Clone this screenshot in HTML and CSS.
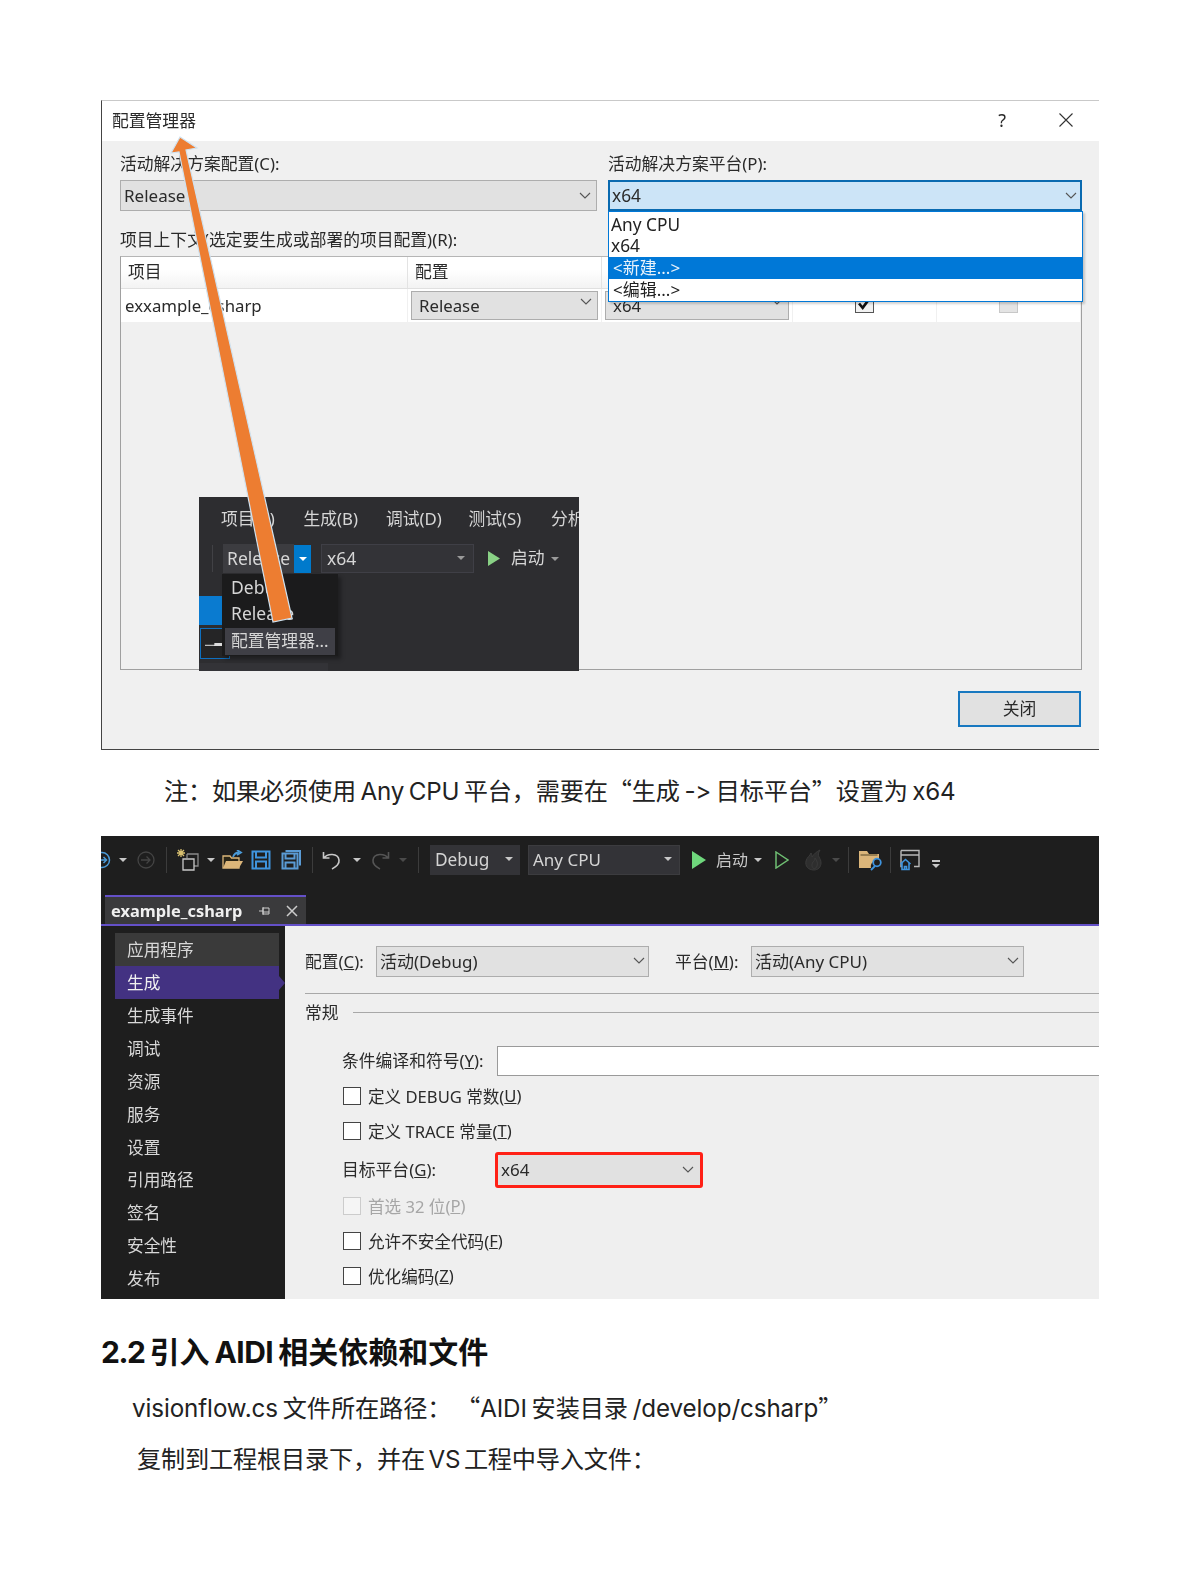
FILE: index.html
```html
<!DOCTYPE html>
<html lang="zh-CN">
<head>
<meta charset="utf-8">
<title>AIDI</title>
<link rel="stylesheet" href="styles.css">
</head>
<body>
<section class="dialog shot">
  <header class="titlebar">
    <span class="title">配置管理器</span>
    <span class="help">?</span>
    <svg class="close" viewBox="0 0 14 14"><path d="M0.5 0.5 13.5 13.5M13.5 0.5 0.5 13.5"/></svg>
  </header>
  <div class="dlg-body">
    <div class="dlg-top">
      <div>
        <div class="lbl">活动解决方案配置(C):</div>
        <div class="combo">Release<svg class="chev" viewBox="0 0 12 7"><path d="M1 1l5 5 5-5"/></svg></div>
      </div>
      <div>
        <div class="lbl">活动解决方案平台(P):</div>
        <div class="combo combo-focus">x64<svg class="chev" viewBox="0 0 12 7"><path d="M1 1l5 5 5-5"/></svg></div>
      </div>
    </div>
    <div class="lbl lbl-ctx">项目上下文(选定要生成或部署的项目配置)(R):</div>
    <div class="panel">
      <div class="grid-head">
        <div>项目</div><div>配置</div><div></div><div></div><div></div>
      </div>
      <div class="grid-row">
        <div class="cell-name">exxample_csharp</div>
        <div class="cell-sel"><div class="mini">Release<svg class="chev" viewBox="0 0 12 7"><path d="M1 1l5 5 5-5"/></svg></div></div>
        <div class="cell-sel"><div class="mini">x64<svg class="chev" viewBox="0 0 12 7"><path d="M1 1l5 5 5-5"/></svg></div></div>
        <div class="cell-chk"><span class="gridchk"><svg viewBox="0 0 14 14"><path d="M2.5 7l3 3.500 6-8"/></svg></span></div>
        <div class="cell-chk"><span class="gridchk off"></span></div>
      </div>
    </div>
    <div class="btn-row"><div class="btn">关闭</div></div>
  </div>

  <div class="dropdown">
    <div class="dd-item">Any CPU</div>
    <div class="dd-item">x64</div>
    <div class="dd-item dd-sel">&lt;新建...&gt;</div>
    <div class="dd-item">&lt;编辑...&gt;</div>
  </div>

  <div class="inset">
    <div class="in-menu"><span>项目(P)</span><span>生成(B)</span><span>调试(D)</span><span>测试(S)</span><span>分析(N)</span></div>
    <div class="in-tools">
      <i class="in-sep"></i>
      <div class="in-rel">Release</div>
      <div class="in-btn"><b class="car car-w"></b></div>
      <div class="in-x64">x64<b class="car car-g"></b></div>
      <svg class="in-play" viewBox="0 0 12 15"><path d="M0 0 12 7.500 0 15z"/></svg>
      <span class="in-start">启动</span><b class="car car-g"></b>
    </div>
    <div class="in-blue"></div>
    <div class="in-outline"><i></i></div>
    <div class="in-foot"></div>
    <div class="in-menu-pop">
      <div class="pop-item">Debug</div>
      <div class="pop-item">Release</div>
      <div class="pop-item pop-sel">配置管理器...</div>
    </div>
  </div>

  <svg class="arrow" viewBox="0 0 998 650">
    <polygon transform="translate(-102 -101)" points="180,137 197,148 186,150 292,618 273,622 179,152 171,153"/>
  </svg>
</section>

<p class="note">注<span class="cjk">&#xFF1A;</span>如果必须使用 Any CPU 平台<span class="cjk">&#xFF0C;</span>需要在<span class="cjk">“</span>生成 -&gt; 目标平台<span class="cjk">”</span>设置为 x64</p>

<section class="vs shot">
  <div class="vs-top">
    <div class="toolbar">
      <svg class="ic ic-back" viewBox="0 0 10 20"><circle cx="1" cy="10" r="7.500"/><path d="M-2 10h7M2.500 7l3 3-3 3"/></svg>
      <b class="car car-l t1"></b>
      <svg class="ic ic-fwd" viewBox="0 0 20 20"><circle cx="10" cy="10" r="8"/><path d="M5 10h9M10.500 6.500 14 10l-3.500 3.500"/></svg>
      <i class="sep s1"></i>
      <svg class="ic ic-new" viewBox="0 0 24 24"><path class="spark" d="M5 1v8M1 5h8M2 2l6 6M8 2 2 8"/><path class="wh dim" d="M11 6h11v12h-4"/><path class="wh dim" d="M11 6v4"/><path class="wh" d="M7 11h11v11H7z"/></svg>
      <b class="car car-l t2"></b>
      <svg class="ic ic-open" viewBox="0 0 22 20"><path class="ftan" d="M1 6h7l1.500 2H17v10H1z"/><path class="ffill" d="M1 18 4 11h17l-4 7z"/><path class="fblue" d="M11 7c1-3 3-4.500 6-4.500M15 0l4 2.500L15 5"/></svg>
      <svg class="ic ic-save" viewBox="0 0 20 20"><path d="M1.500 1.500h17v17h-17z M5 1.500v6h10v-6M5 18.500v-7h10v7"/></svg>
      <svg class="ic ic-save all" viewBox="0 0 20 20"><path d="M1.500 3.500h15v15h-15z M4.500 3.500v5h9v-5M4.500 18.500v-6h9v6M4.500 1h14.500v14.500"/></svg>
      <i class="sep s2"></i>
      <svg class="ic ic-undo" viewBox="0 0 20 20"><path d="M1.500 2v6h6M2 8c3-4.500 14-5.500 15 2 .6 4.500-3 6.500-7 9"/></svg>
      <b class="car car-l t3"></b>
      <svg class="ic ic-redo" viewBox="0 0 20 20"><path d="M18.500 2v6h-6M18 8c-3-4.500-14-5.500-15 2-.6 4.500 3 6.500 7 9"/></svg>
      <b class="car car-d t4"></b>
      <i class="sep s3"></i>
      <div class="tb-box tb-debug">Debug<b class="car car-l"></b></div>
      <div class="tb-box tb-any">Any CPU<b class="car car-l"></b></div>
      <svg class="ic ic-play" viewBox="0 0 14 18"><path d="M0 0 14 9 0 18z"/></svg>
      <span class="tb-start">启动</span>
      <b class="car car-l t5"></b>
      <svg class="ic ic-play2" viewBox="0 0 14 18"><path d="M1 1 13 9 1 17z"/></svg>
      <svg class="ic ic-flame" viewBox="0 0 20 22"><path d="M10 21C4 21 1 17 2 12c1-4 4-5 5-8 1 2 1 3 1 4 2-3 4-5 8-7-2 3-2 5-1 7s2 3 2 6c0 4-3 7-7 7zM10 20c-2-2-3-4-1-7 1-1 2-2 2-4 2 3 3 5 2 8-.4 1.500-1.500 2.500-3 3z"/></svg>
      <b class="car car-d t6"></b>
      <i class="sep s4"></i>
      <svg class="ic ic-fs" viewBox="0 0 24 22"><path class="ftan2" d="M1 2h8l2 3h10v7a6 6 0 0 0-8 7H1z"/><path class="ftop" d="M2.500 6h17"/><path class="fblue2" d="M13 21l4-4"/><circle class="fblue2" cx="19" cy="13.500" r="3.800"/></svg>
      <i class="sep s5"></i>
      <svg class="ic ic-win" viewBox="0 0 22 22"><path class="wg" d="M2 1.500h18v16h-5M2 1.500v16h2M2 6h18"/><path class="wb" d="M1.500 15 6.500 10.500 11.500 15M3 14v6.500h7V14M5.500 20.500v-3h2v3"/></svg>
      <span class="ovf"><i></i><b class="car car-l"></b></span>
    </div>
    <div class="tabrow">
      <div class="tab">
        <span class="tab-name">example_csharp</span>
        <svg class="pin" viewBox="0 0 12 12"><path d="M0 6h4M4 3h6v6H4zM4 7h6M4 2v8"/></svg>
        <svg class="tab-x" viewBox="0 0 12 12"><path d="M1 1l10 10M11 1 1 11"/></svg>
      </div>
    </div>
  </div>
  <div class="vs-main">
    <nav class="nav">
      <div class="nav-item first">应用程序</div>
      <div class="nav-item cur">生成</div>
      <div class="nav-item">生成事件</div>
      <div class="nav-item">调试</div>
      <div class="nav-item">资源</div>
      <div class="nav-item">服务</div>
      <div class="nav-item">设置</div>
      <div class="nav-item">引用路径</div>
      <div class="nav-item">签名</div>
      <div class="nav-item">安全性</div>
      <div class="nav-item">发布</div>
    </nav>
    <div class="content">
      <div class="cfg">
        <span class="cfg-l1">配置(<u>C</u>):</span>
        <div class="combo cfg-s1">活动(Debug)<svg class="chev" viewBox="0 0 12 7"><path d="M1 1l5 5 5-5"/></svg></div>
        <span class="cfg-l2">平台(<u>M</u>):</span>
        <div class="combo cfg-s2">活动(Any CPU)<svg class="chev" viewBox="0 0 12 7"><path d="M1 1l5 5 5-5"/></svg></div>
      </div>
      <hr class="rule">
      <div class="group"><span>常规</span><i></i></div>
      <div class="form">
        <div class="frow"><span class="flbl">条件编译和符号(<u>Y</u>):</span><div class="input"></div></div>
        <div class="frow"><span class="box"></span>定义 DEBUG 常数(<u>U</u>)</div>
        <div class="frow"><span class="box"></span>定义 TRACE 常量(<u>T</u>)</div>
        <div class="frow frow-t"><span class="flbl2">目标平台(<u>G</u>):</span><div class="redsel">x64<svg class="chev" viewBox="0 0 12 7"><path d="M1 1l5 5 5-5"/></svg></div></div>
        <div class="frow dis"><span class="box"></span>首选 32 位(<u>P</u>)</div>
        <div class="frow"><span class="box"></span>允许不安全代码(<u>F</u>)</div>
        <div class="frow"><span class="box"></span>优化编码(<u>Z</u>)</div>
      </div>
    </div>
  </div>
</section>

<h2 class="h2"><span class="h2-num">2.2</span> 引入 <span class="h2-lat">AIDI</span> 相关依赖和文件</h2>
<p class="p1">visionflow.cs 文件所在路径<span class="cjk">&#xFF1A;</span> <span class="cjk">“</span>AIDI 安装目录 /develop/csharp<span class="cjk">”</span></p>
<p class="p2">复制到工程根目录下<span class="cjk">&#xFF0C;</span>并在 VS 工程中导入文件<span class="cjk">&#xFF1A;</span></p>
</body>
</html>
```
FILE: styles.css
```css
* { box-sizing: border-box; }
html, body { margin: 0; padding: 0; background: #fff; }
body {
  width: 1200px;
  height: 1584px;
  overflow: hidden;
  padding: 100px 0 0 101px;
  font-family: Inter, "Noto Sans CJK SC", sans-serif;
  color: #222;
}
.cjk { font-family: "Noto Sans CJK SC", sans-serif; }
.shot, .shot * { font-family: "Noto Sans", "Noto Sans CJK SC", sans-serif; }
.shot { filter: blur(0.35px); }

/* dialog */
.dialog {
  position: relative;
  width: 998px;
  height: 650px;
  background: #f0f0f0;
  border-top: 1px solid #c9c9c9;
  border-left: 1px solid #444;
  border-bottom: 1px solid #444;
  overflow: hidden;
  font-size: 16.8px;
  color: #2a2a2a;
}
.titlebar {
  height: 40px;
  background: #fff;
  display: flex;
  align-items: center;
  padding-left: 10px;
}
.title { flex: 1; padding-bottom: 3px; }
.help { font-size: 18px; margin-right: 53px; padding-bottom: 3px; }
.close { width: 14px; height: 14px; margin-right: 26px; margin-bottom: 2px; }
.close path { stroke: #333; stroke-width: 1.1; fill: none; }
.dlg-body { padding: 0 16px 0 18px; }
.dlg-top {
  display: grid;
  grid-template-columns: 477px 474px;
  column-gap: 11px;
}
.lbl { line-height: 24px; margin: 11px 0 4px; }
.lbl-ctx { margin: 17px 0 4px; }
.combo {
  height: 31px;
  display: flex;
  align-items: center;
  justify-content: space-between;
  background: #e1e1e1;
  border: 1px solid #adadad;
  padding: 0 5px 1px 3px;
  font-size: 17px;
}
.combo-focus {
  background: #cce4f7;
  border: 2px solid #0a6ab0;
  padding: 0 3px 0 2px;
  font-size: 17.300px;
}
.chev { width: 12px; height: 7px; flex: none; }
.chev path { stroke: #555; stroke-width: 1.1; fill: none; }
.panel {
  height: 414px;
  width: 962px;
  border: 1px solid #a0a0a0;
  border-top-color: #b5b5b5;
  background: #f0f0f0;
}
.grid-head, .grid-row {
  display: grid;
  grid-template-columns: 287px 194px 191px 144px 1fr;
}
.grid-head {
  height: 32px;
  background: linear-gradient(#fff 0, #fff 40%, #f3f3f3 100%);
  border-bottom: 1px solid #e0e0e0;
}
.grid-head div {
  padding-left: 7px;
  line-height: 30px;
  border-right: 1px solid #e3e3e3;
}
.grid-row { height: 33px; background: #fff; }
.grid-row > div { border-right: 1px solid #f0f0f0; }
.cell-name { padding-left: 4px; line-height: 33px; font-size: 16.800px; }
.cell-sel { padding: 2px 3px; }
.mini {
  height: 29px;
  background: #e1e1e1;
  border: 1px solid #adadad;
  display: flex;
  align-items: center;
  justify-content: space-between;
  padding: 0 5px 1px 7px;
  font-size: 16.800px;
}
.mini .chev { margin-top: -8px; }
.cell-chk { display: flex; justify-content: center; align-items: flex-start; padding-top: 5px; }
.gridchk {
  width: 19px; height: 19px;
  background: #f2f2f2;
  border: 1px solid #555;
  display: block;
}
.gridchk svg { display: block; width: 17px; height: 17px; }
.gridchk path { fill: none; stroke: #111; stroke-width: 2.200; }
.gridchk.off { background: #e4e4e4; border-color: #c8c8c8; }
.btn-row { display: flex; justify-content: flex-end; margin-top: 21px; width: 962px; padding-right: 1px; }
.btn {
  width: 123px; height: 36px;
  background: #e1e1e1;
  border: 2px solid #1878c0;
  text-align: center;
  line-height: 31px;
}

.dropdown {
  position: absolute;
  left: 506px; top: 110px;
  width: 475px; height: 91px;
  background: #fff;
  border: 1px solid #0078d7;
  box-shadow: 2px 2px 2px rgba(0,0,0,.18);
  font-size: 17.300px;
  color: #222;
  padding-top: 1px;
}
.dd-item { height: 22px; line-height: 22px; padding-left: 2px; }
.dd-item:first-child { line-height: 24px; }
.dd-item:nth-child(n+3) { height: 22px; line-height: 21px; padding-left: 4px; font-size: 17px; }
.dd-sel { background: #0078d7; color: #e8f2fb; }

/* dark inset */
.inset {
  position: absolute;
  left: 97px; top: 396px;
  width: 380px; height: 174px;
  background: #2d2d30;
  overflow: hidden;
  color: #d6d6d6;
  font-size: 16.800px;
}
.in-menu { display: flex; height: 47px; padding: 10px 0 0 22px; line-height: 24px; white-space: nowrap; }
.in-menu span { width: 82.500px; flex: none; }
.in-tools { display: flex; align-items: center; height: 29px; position: relative; }
.in-sep { width: 1px; height: 27px; background: #414145; margin: 0 10px 0 13px; }
.in-rel { width: 71px; height: 29px; line-height: 28px; padding-left: 4px; background: #3c3c40; font-size: 17.5px; flex: none; overflow: hidden; }
.in-btn { width: 17px; height: 28px; background: #007acc; display: flex; align-items: center; justify-content: center; flex: none; }
.in-x64 { width: 153px; height: 29px; margin-left: 10px; background: #333337; border: 1px solid #3f3f46; display: flex; align-items: center; justify-content: space-between; padding: 0 8px 1px 5px; font-size: 17.5px; flex: none; }
.in-play { width: 12px; height: 15px; margin: 0 11px 0 14px; flex: none; }
.in-play path { fill: #89d185; }
.in-start { margin-right: 6px; padding-bottom: 3px; }
.car { display: block; width: 0; height: 0; border: 4px solid transparent; border-top-width: 4px; border-bottom: 0; flex: none; }
.car-w { border-top-color: #fff; }
.car-g { border-top-color: #9a9a9a; }
.car-l { border-top-color: #c8c8c8; }
.car-d { border-top-color: #4a4a4a; }
.in-blue { position: absolute; left: 0; top: 99px; width: 23px; height: 29px; background: #0a7bd0; }
.in-outline { position: absolute; left: 1px; top: 131px; width: 30px; height: 31px; border: 1px solid #0e70c0; background: #252526; }
.in-outline i { position: absolute; left: 4px; top: 14px; width: 17px; height: 3px; background: linear-gradient(90deg, #bbb 0, #bbb 55%, #ddd 55%); clip-path: polygon(0 60%, 55% 60%, 55% 0, 100% 0, 100% 100%, 0 100%); }
.in-foot { position: absolute; left: 0; top: 166px; width: 129px; height: 8px; background: #333337; }
.in-menu-pop {
  position: absolute;
  left: 23px; top: 77px;
  width: 116px; height: 82px;
  background: #1b1b1c;
  box-shadow: 3px 3px 4px rgba(0,0,0,.35);
  padding: 0 3px;
  font-size: 17.5px;
}
.pop-item { height: 26px; line-height: 26px; padding-left: 6px; }
.pop-sel { height: 27px; margin-top: 2px; background: #3f3f46; font-size: 16.800px; line-height: 25px; white-space: nowrap; }

.arrow { position: absolute; left: 0; top: 0; width: 998px; height: 650px; pointer-events: none; }
.arrow polygon { fill: #ed7d31; stroke: #cfe2f0; stroke-width: 1.200; }

/* text */
.note { margin: 0; padding: 23px 0 0 63px; height: 86px; font-size: 24.200px; line-height: 34px; letter-spacing: -0.2px; word-spacing: -2px; white-space: nowrap; }

/* vs */
.vs { width: 998px; height: 463px; background: #1e1e1e; overflow: hidden; }
.vs-top { height: 90px; border-bottom: 2px solid #6450c8; }
.toolbar { height: 59px; display: flex; align-items: center; padding-bottom: 12px; }
.ic { flex: none; fill: none; }
.ic-back { width: 10px; height: 20px; margin-right: 3px; }
.ic-back circle, .ic-back path { stroke: #4a9ad8; stroke-width: 1.500; fill: none; }
.t1 { margin: 0 6px 0 5px; }
.ic-fwd { width: 20px; height: 20px; margin-left: 3px; }
.ic-fwd circle, .ic-fwd path { stroke: #444; stroke-width: 1.300; }
.sep { width: 1px; height: 26px; background: #3c3c3c; flex: none; }
.s1 { margin: 0 9px 0 10px; }
.ic-new { width: 24px; height: 24px; }
.spark { stroke: #d8c070; stroke-width: 1.300; }
.wh { stroke: #c8c8c8; stroke-width: 1.300; fill: none; }
.wh.dim { stroke: #8a8a8a; }
.t2 { margin: 0 7px 0 7px; }
.ic-open { width: 22px; height: 20px; margin-right: 7px; }
.ftan { fill: #2a2516; stroke: #dcb67a; stroke-width: 1.300; }
.ffill { fill: #dcb67a; }
.fblue { stroke: #4a9ad8; stroke-width: 1.800; fill: none; }
.ic-save { width: 20px; height: 20px; margin-right: 10px; }
.ic-save path { stroke: #3f94de; stroke-width: 2; }
.ic-save.all path { stroke: #5a9bd5; }
.s2 { margin: 0 9px 0 1px; }
.ic-undo { width: 20px; height: 20px; }
.ic-undo path { stroke: #c8c8c8; stroke-width: 1.600; }
.t3 { margin: 0 9px 0 11px; }
.ic-redo { width: 20px; height: 20px; }
.ic-redo path { stroke: #555; stroke-width: 1.600; }
.t4 { margin: 0 9px 0 9px; }
.s3 { margin: 0 11px 0 2px; }
.tb-box {
  height: 30px;
  background: #333337;
  color: #d4d4d4;
  display: flex;
  align-items: center;
  justify-content: space-between;
  font-size: 17.300px;
  flex: none;
}
.tb-debug { width: 90px; padding: 0 7px 1px 5px; margin-right: 8px; }
.tb-any { width: 152px; padding: 0 7px 1px 4px; border: 1px solid #3c3c3f; margin-right: 12px; font-size: 17px; }
.ic-play { width: 14px; height: 18px; margin-right: 10px; }
.ic-play path { fill: #6fd77c; }
.tb-start { color: #c8c8c8; font-size: 16px; margin-right: 6px; padding-bottom: 2px; }
.t5 { margin-right: 13px; }
.ic-play2 { width: 14px; height: 18px; margin-right: 15px; }
.ic-play2 path { stroke: #6fbf73; stroke-width: 1.500; fill: none; }
.ic-flame { width: 20px; height: 22px; margin-right: 8px; }
.ic-flame path { fill: #2e2e2e; stroke: #3a3a3a; }
.s4 { margin: 0 9px 0 8px; }
.ic-fs { width: 24px; height: 22px; }
.ftan2 { fill: #dcb67a; }
.ftop { stroke: #6d5a36; stroke-width: 1.200; fill: none; }
.fblue2 { stroke: #3f94de; stroke-width: 1.800; fill: #1e1e1e; }
.s5 { margin: 0 8px 0 8px; }
.ic-win { width: 22px; height: 22px; }
.wg { stroke: #b8b8b8; stroke-width: 1.400; fill: none; }
.wb { stroke: #3f94de; stroke-width: 1.600; fill: #1e1e1e; }
.ovf { display: block; margin: 8px 0 0 11px; }
.ovf i { display: block; width: 8px; height: 2px; background: #c8c8c8; margin-bottom: 2px; }
.tabrow { height: 29px; padding-left: 4px; }
.tab {
  width: 201px; height: 29px;
  background: #3a3a3c;
  border-top: 2px solid #6450c8;
  display: flex;
  align-items: center;
  padding-left: 6px;
  color: #f0f0f0;
}
.tab-name { font-weight: 700; font-size: 16.400px; flex: 1; white-space: nowrap; }
.pin { width: 12px; height: 12px; margin-right: 15px; flex: none; }
.pin path { stroke: #ccc; stroke-width: 1; fill: none; }
.tab-x { width: 12px; height: 12px; margin-right: 8px; flex: none; }
.tab-x path { stroke: #ccc; stroke-width: 1.500; fill: none; }
.vs-main { display: flex; height: 373px; }
.nav { width: 184px; flex: none; padding: 7px 6px 0 14px; color: #d8d8d8; font-size: 16.700px; }
.nav-item { height: 32.930px; line-height: 34px; padding-left: 12px; }
.nav-item.first { background: #3a3a3a; }
.nav-item.cur { background: #433282; position: relative; color: #f0f0f0; }
.nav-item.cur::after {
  content: "";
  position: absolute;
  right: -6px; top: 10px;
  border-left: 6px solid #433282;
  border-top: 7px solid transparent;
  border-bottom: 7px solid transparent;
}
.content { flex: 1; background: #efefef; color: #2a2a2a; font-size: 16.800px; min-width: 0; }
.cfg { display: flex; align-items: center; height: 31px; margin-top: 20px; padding-left: 20px; }
.cfg-l1 { width: 71px; flex: none; padding-bottom: 2px; }
.cfg-s1 { width: 273px; flex: none; padding-right: 3px; padding-bottom: 2px; }
.cfg-l2 { margin-left: 26px; width: 76px; flex: none; padding-bottom: 2px; }
.cfg-s2 { width: 273px; flex: none; padding-right: 4px; padding-bottom: 2px; }
.rule { border: 0; border-top: 1px solid #a8a8a8; margin: 16px 0 0 20px; height: 0; }
.group { display: flex; align-items: center; height: 20px; margin: 8px 0 0 20px; }
.group span { padding-bottom: 0; }
.group i { flex: 1; height: 1px; background: #a8a8a8; margin-left: 14px; }
.form { margin-top: 21px; padding-left: 58px; font-size: 16.600px; }
.frow { display: flex; align-items: center; height: 35px; white-space: nowrap; }
.flbl { width: 154px; flex: none; padding-bottom: 2px; margin-left: -1px; margin-right: 1px; font-size: 16.800px; }
.input { flex: 1; height: 30px; background: #fff; border: 1px solid #9a9a9a; border-right: 0; }
.box { width: 18px; height: 18px; background: #fff; border: 1px solid #444; margin-right: 7px; flex: none; }
.frow-t { height: 40px; padding-top: 3px; }
.flbl2 { width: 152px; flex: none; padding-bottom: 1px; margin-left: -1px; margin-right: 1px; font-size: 16.800px; }
.redsel {
  width: 208px; height: 36px;
  background: #e1e1e1;
  border: 3px solid #ff2016;
  border-radius: 3px;
  display: flex;
  align-items: center;
  justify-content: space-between;
  padding: 0 6px 0 3px;
  font-size: 17px;
}
.dis { color: #a6a6a6; }
.dis .box { border-color: #ccc; background: #f5f5f5; }

.h2 { margin: 34px 0 0; font-size: 30px; line-height: 38px; font-weight: 700; color: #111; word-spacing: -2px; white-space: nowrap; }
.h2-num { letter-spacing: -1.500px; }
.h2-lat { letter-spacing: -0.600px; }
.p1 { margin: 19px 0 0 31px; font-size: 24.200px; line-height: 34px; letter-spacing: -0.1px; word-spacing: -2px; white-space: nowrap; }
.p2 { margin: 15px 0 0 36px; font-size: 24.200px; line-height: 34px; letter-spacing: -0.2px; word-spacing: -3px; white-space: nowrap; }
```
